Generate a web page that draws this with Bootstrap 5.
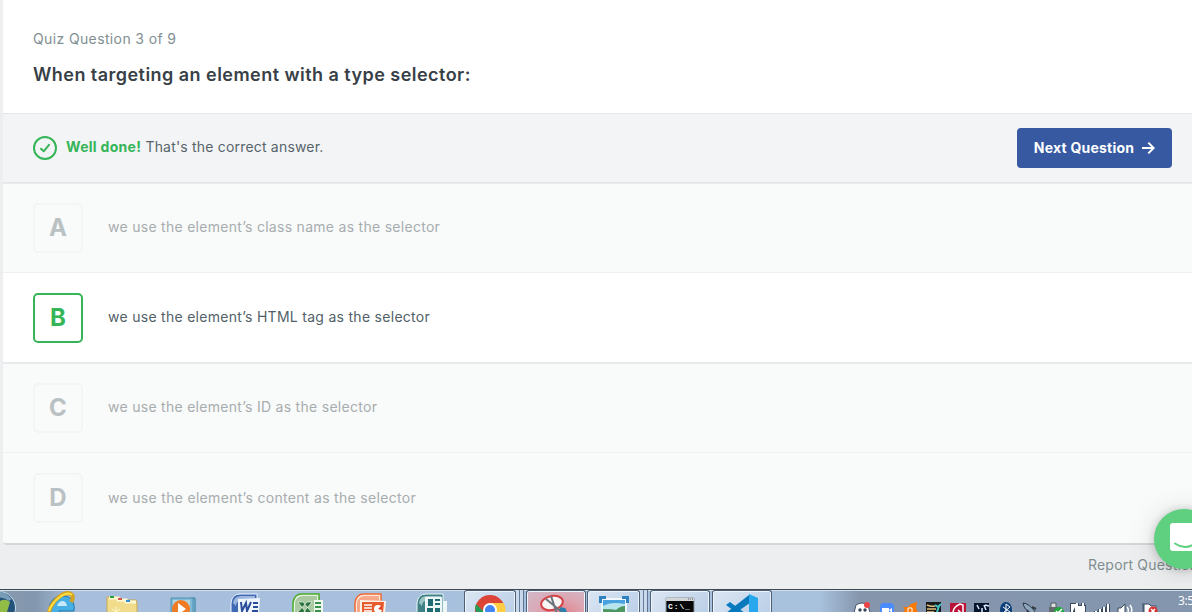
<!DOCTYPE html>
<html lang="en">
<head>
<meta charset="utf-8">
<meta name="viewport" content="width=device-width, initial-scale=1">
<title>Quiz Question 3 of 9</title>
<link href="https://cdn.jsdelivr.net/npm/bootstrap@5.3.0/dist/css/bootstrap.min.css" rel="stylesheet">
<style>
html,body{height:612px;overflow:hidden}
body{background:#edeef0;font-family:Inter,"Open Sans",sans-serif;font-size:14px;line-height:20px;color:#57646b;white-space:nowrap}
.quiz-panel{margin-left:3px;height:545px;border-bottom:2px solid #d3d7d8;border-bottom-left-radius:4px;overflow:hidden;background:#fff}
.quiz-head{height:113px;padding:29px 30px 0}
.quiz-step{color:#7f8f91;letter-spacing:.37px}
.quiz-title{font-size:18px;font-weight:600;line-height:26px;color:#384047;margin:13px 0 0;letter-spacing:.46px}
.feedback{height:70px;background:#f3f4f6;border-top:1px solid #e3e6e8;border-bottom:1px solid #e3e6e8;padding:0 20px 0 30px}
.feedback-copy{margin-left:9px;padding-bottom:2px;letter-spacing:.19px}
.feedback b{color:#35b558;font-weight:700;letter-spacing:.3px}
.btn-next{width:155px;height:40px;border:0;border-radius:4px;background:#3659a2;color:#fff;font-size:14px;font-weight:700;padding:0 0 1px;letter-spacing:.22px}
.btn-next:hover{background:#2f4f92;color:#fff}
.answer{height:90px;padding:0 30px;gap:25px;background:#f9fafa;border-bottom:1px solid #eff1f1;color:#a7adaf}
.answer.after-line{box-shadow:inset 0 1px #e8eaeb}
.answer.chosen{background:#fff;color:#525f68;border-bottom-color:#e8eaeb}
.answer:last-child{border-bottom:0}
.answer-text{letter-spacing:.285px;padding-bottom:2px}
.answer:last-child .answer-text{padding-bottom:0;letter-spacing:.31px}
.letter-box{width:50px;height:50px;border:2px solid #f3f5f5;border-radius:5px;color:#b9c1c3;font-size:24px;font-weight:700}
.chosen .letter-box{border-color:#35b558;color:#35b558}
.report{height:44px;padding:10px 0 0 1088px;color:#7f8f91;letter-spacing:.2px}
.chat{position:absolute;left:1154px;top:509px;width:60px;height:60px;border-radius:50%;background:#5fcf80;box-shadow:0 1px 8px #0003,0 2px 30px #0002}
.chat-clip{position:absolute;inset:0;height:589px;overflow:hidden;pointer-events:none}
.taskbar{position:relative;height:23px;background:linear-gradient(90deg,#889aaf 0,#8296ad 35px,#a7bfdc 72px,#a8c1dd 820px,#8495ac 860px,#8496ae 100%);border-top:1px solid #3f4953;box-shadow:inset 0 1px #d2dfeb;overflow:hidden}
.taskbar svg{display:block;flex:none;margin-top:1px}
.slot{width:62px;flex:none}
.win{flex:none;height:24px;border:1px solid #4d6076;border-bottom:0;border-radius:3px 3px 0 0;box-shadow:inset 0 0 0 1px #edf4fc;background:linear-gradient(135deg,#dce6f2,#b9cee7)}
.win svg{margin-left:auto;margin-right:auto}
.win.red{background:radial-gradient(ellipse at 60% 100%,#e28088,#dba8b4 50%,#cfb9ca)}
.stack-edge{flex:none;width:8px;height:24px;margin-right:2px;border-right:1px solid #5d7390;background:linear-gradient(90deg,#c9d9eb 0 3px,#667d99 3px 4px,#c9d9eb 4px)}
.tray{width:312px;margin-left:78px}
.clock{font:12px/22px "Open Sans","Noto Sans",sans-serif;color:#fff;margin-left:16px;letter-spacing:-.4px}
.cmd{font:bold 8px "Liberation Mono",monospace;letter-spacing:.9px}
</style>
</head>
<body class="position-relative">
<main class="quiz-panel">
  <header class="quiz-head">
    <div class="quiz-step"><span id="step">Quiz Question 3 of 9</span></div>
    <h1 class="quiz-title"><span>When targeting an element with a type selector:</span></h1>
  </header>
  <section class="feedback d-flex align-items-center justify-content-between">
    <div class="d-flex align-items-center">
      <svg width="24" height="24" fill="none" stroke="#35b558" stroke-width="2"><circle cx="12" cy="12" r="11"/><path d="M8 12.800l2.700 2.500L16 8.800" stroke-linecap="round" stroke-linejoin="round"/></svg>
      <div class="feedback-copy"><b>Well done!</b> <span>That's the correct answer.</span></div>
    </div>
    <button class="btn btn-next d-flex align-items-center justify-content-center"><span>Next Question</span><svg class="ms-2" width="13" height="14" fill="none" stroke="#fff" stroke-width="2"><path d="M0 7h11.5M6.3 1.6L11.7 7l-5.4 5.4"/></svg></button>
  </section>
  <div class="answers">
    <div class="answer after-line d-flex align-items-center"><div class="letter-box d-flex align-items-center justify-content-center">A</div><span class="answer-text">we use the element’s class name as the selector</span></div>
    <div class="answer chosen d-flex align-items-center"><div class="letter-box d-flex align-items-center justify-content-center">B</div><span class="answer-text">we use the element’s HTML tag as the selector</span></div>
    <div class="answer after-line d-flex align-items-center"><div class="letter-box d-flex align-items-center justify-content-center">C</div><span class="answer-text">we use the element’s ID as the selector</span></div>
    <div class="answer d-flex align-items-center"><div class="letter-box d-flex align-items-center justify-content-center">D</div><span class="answer-text">we use the element’s content as the selector</span></div>
  </div>
</main>
<div class="report"><span>Report Question</span></div>
<div class="chat-clip"><div class="chat"><svg width="60" height="60"><path d="M19 14h24a3 3 0 013 3v29l-7-4H19a3 3 0 01-3-3V17a3 3 0 013-3z" fill="#fff"/><path d="M21 34.500q10 7 20 0" fill="none" stroke="#5fcf80" stroke-width="2" stroke-linecap="round"/></svg></div></div>

<footer class="taskbar d-flex">
  <svg width="30" height="21"><circle cx="-1" cy="17" r="16.500" fill="#23527b" stroke="#c4dded"/><path d="M-12 4Q0-5 12 8L9 10Q0 3-12 10z" fill="#789db9"/><path d="M0 10q5-3 10 1l-3 10H0z" fill="#91bc45"/></svg>
  <!-- pinned programs -->
  <svg class="slot" height="21"><path d="M20 24C17 11 24 5 33 5c9 0 12 7 11 15H29c1 3 5 3 8 3" fill="#47afe3" stroke="#1c76ae"/><path d="M27 15c2-6 9-7 10 0z" fill="#c7e9fa"/><path d="M19 21C22 9 36-2 42 4q2 2-1 7" fill="none" stroke="#d5a21d" stroke-width="4"/><path d="M19 20C23 9 36-1 42 4" fill="none" stroke="#ffdf44" stroke-width="2"/></svg>
  <svg class="slot" height="21"><path d="M15 22V6h11l2 3h16l1 3v10z" fill="#f1dc8b" stroke="#c8a956"/><path d="M17 7h9v2h8v2h10" fill="none" stroke="#fff8d5" stroke-width="3"/><path d="M18 6h4" stroke="#26a33c" stroke-width="2"/><path d="M26 8h4" stroke="#db5547" stroke-width="2"/><path d="M34 10h4" stroke="#328ed7" stroke-width="2"/><path d="M24 16v5m-4-3l4 3m4-3l-4 3" stroke="#fff9d6"/></svg>
  <svg class="slot" height="21"><path d="M17 7h24v15H17z" fill="#82b9d5" stroke="#4f90b3"/><path d="M37 7h4v15m-2-15v15" stroke="#4f90b3" fill="none"/><path d="M19 9h17v13H19z" fill="#b2d5e4"/><circle cx="27" cy="18" r="9" fill="#f07b25"/><path d="M24 12l8 6-8 6z" fill="#fff"/></svg>
  <svg class="slot" height="21"><path d="M15 22V12q1-9 9-9h17v19z" fill="#3f69b2" stroke="#edf3ff"/><path d="M17 12q1-7 8-7h14v5H25q-5 0-5 5z" fill="#9eb6dd"/><path d="M22 8l22-1-1 15H22z" fill="#edf4fb"/><path d="M25 11l1 9 4-8 1 8 4-9" fill="none" stroke="#294c9a" stroke-width="2"/><path d="M37 12h5m-5 4h5m-6 4h6" stroke="#294c9a" stroke-width="2"/></svg>
  <svg class="slot" height="21"><path d="M15 22V12q1-9 9-9h17v19z" fill="#e7f4e1" stroke="#4cac27" stroke-width="1.500"/><path d="M17 22V12q1-7 8-7h14v17z" fill="#a9c9a0"/><path d="M36 9h9v13h-9z" fill="#edf7ed"/><path d="M20 11h5l10 12h-6zm14 0h-5L19 22h6z" fill="#28723c" stroke="#fff" stroke-width=".6"/><path d="M37 12h6m-6 4h6m-6 4h6" stroke="#37924a" stroke-width="2"/></svg>
  <svg class="slot" height="21"><path d="M15 22V12q1-9 9-9h17v19z" fill="#ffe9dd" stroke="#f26a35" stroke-width="1.500"/><path d="M17 22V12q1-7 8-7h14v17z" fill="#f6a888"/><path d="M20 9l26 1-1 12H20z" fill="#fff0e6"/><path d="M22 11h22l-1 11H22z" fill="#e75b2d"/><path d="M24 14h8m-8 3h8m-8 3h8" stroke="#fff" stroke-width="1.500"/><circle cx="38" cy="18" r="4" fill="#fff"/><path d="M38 18l4-4v5z" fill="#df4322"/></svg>
  <svg class="slot" height="21"><path d="M15 22V12q1-9 9-9h17v19z" fill="#3f8187" stroke="#e7f5f5"/><path d="M17 12q1-7 8-7h14v5H25q-5 0-5 5z" fill="#9cc4c5"/><path d="M23 6h17v16H23z" fill="#edf6f7"/><path d="M26 8h5v7h-5zm7 0h5v2h-5zm0 4h5v2h-5zm-8 5h6v4h-6zm8 0h5v4h-5z" fill="#206a72"/><path d="M43 10v11" stroke="#edf6f7" stroke-width="4"/></svg>
  <!-- open windows -->
  <div class="win" style="width:52px"><svg width="32" height="22"><circle cx="16" cy="18" r="15" fill="#db4437"/><path d="M2 12l9 9-3 5Q-1 20 2 12z" fill="#209e58"/><path d="M16 11h13.500q4 7 0 15H17l5-8z" fill="#ffcd43"/><circle cx="16" cy="18" r="6" fill="#4285f4" stroke="#fff" stroke-width="2"/></svg></div><i class="stack-edge"></i>
  <div class="win red me-0" style="width:60px"><svg width="44" height="22"><ellipse cx="18" cy="11" rx="11" ry="7" fill="#f8f5f5" stroke="#d34448" stroke-width="2" transform="rotate(-12 18 11)"/><path d="M12 7l17 14M17 4l6 18" stroke="#6b747d" stroke-width="2"/><path d="M26 17l4 1 2 5" fill="none" stroke="#297eaf" stroke-width="4"/></svg></div>
  <div class="win" style="width:53px;margin-left:1px"><svg width="32" height="22"><path d="M3 6h26v17H3z" fill="#eff8fe"/><path d="M5 8h22v14H5z" fill="#4aa1df"/><path d="M5 14q8-5 22-2v10H5z" fill="#b6e4ed"/><path d="M5 17q9 0 13 1 4-4 9-4v8H5z" fill="#4f9762"/><path d="M2.500 11V5.500H8m16 0h5.500V11" fill="none" stroke="#2f82bf" stroke-width="3"/></svg></div><i class="stack-edge"></i>
  <div class="win" style="width:60px;margin-right:2px"><svg width="30" height="22"><path d="M1 6h28v17H1z" fill="#060708" stroke="#8b949b"/><path d="M1 6h28v3H1z" fill="#d1d5d6"/><path d="M23 7h5" stroke="#596067" stroke-dasharray="1 1"/><text class="cmd" x="3" y="17" fill="#fff">C:\_</text></svg></div>
  <div class="win" style="width:60px"><svg width="34" height="22"><path d="M1 13l4-3 23 17-4 3z" fill="#087cc2"/><path d="M1 21L24 3l5 5L5 25z" fill="#0878bd"/><path d="M24 2l9 4v20h-9z" fill="#27a8ee"/></svg></div>
  <!-- notification area -->
  <div class="tray d-flex">
    <svg width="24" height="21"><path d="M4 22l2-8q6-4 12 0l2 8z" fill="#fff" stroke="#47566b"/><circle cx="10" cy="19" r="1.700" fill="#35465c"/><circle cx="15" cy="19" r="1.700" fill="#35465c"/><circle cx="17" cy="14" r="3" fill="#ed4245"/></svg>
    <svg width="24" height="21"><rect x="6" y="12" width="14" height="12" rx="4" fill="#4a8cff"/><path d="M8 17h7v4H8m7-2l3-2v5" fill="#fff"/></svg>
    <svg width="24" height="21"><path d="M4 22l3-3-2-3h5l3-3 6-2-1 6 2 5z" fill="#ff7800"/><path d="M10 21v-4h4v4" fill="none" stroke="#fff"/></svg>
    <svg width="24" height="21"><path d="M4 11h15v11H4z" fill="#171c1b"/><path d="M5 14q4 2 8 1M5 18h9M5 21h7" fill="none" stroke="#e3bf80" stroke-width="1.500"/><path d="M15 21l2-6m-4-1l3 2 3-3" stroke="#44c2c9" stroke-width="2" fill="none"/></svg>
    <svg width="24" height="21"><path d="M4 12h16v10H4z" fill="#bd1237"/><path d="M7 22q0-6 7-9l3 1v8m-5-3l3 3" fill="none" stroke="#fff" stroke-width="1.500"/></svg>
    <svg width="24" height="21"><path d="M4 12h15v10H4z" fill="#05142b"/><path d="M7 14l2 4m3-1v5m2-8l2 5m-1-5l4 1" stroke="#dceaff" stroke-width="1.500"/></svg>
    <svg width="24" height="21"><ellipse cx="12" cy="19" rx="6" ry="8" fill="#0d3f79"/><path d="M9 16l7 5-4 3V13l4 3-7 6" fill="none" stroke="#fff"/></svg>
    <svg width="24" height="21"><path d="M5 12q6 0 13 10h-5Q6 19 5 12z" fill="#8da6bd" stroke="#303945"/><path d="M14 16l4 2m-9 1l2 3" stroke="#343943" stroke-width="2"/></svg>
    <svg width="24" height="21"><path d="M9 12h5v5H9z" fill="#dce0df" stroke="#505b64"/><path d="M7 16h9v6H7z" fill="#626a6b"/><circle cx="17" cy="21" r="5" fill="#1ea83c"/><path d="M14 20l2 2 4-4" fill="none" stroke="#fff" stroke-width="1.500"/></svg>
    <svg width="24" height="21"><path d="M10 14H6v8m4-6h8v4q-4 2-8 0zm1 0v-4m6 4v-4" fill="none" stroke="#394b61" stroke-width="4"/><path d="M10 14H6v8m4-6h8v4q-4 2-8 0zm1 0v-4m6 4v-4" fill="#fff" stroke="#fff" stroke-width="2"/></svg>
    <svg width="24" height="21"><path d="M6 22v-2m4 2v-4m4 4v-6m4 6V13" stroke="#394b61" stroke-width="4"/><path d="M6 22v-2m4 2v-4m4 4v-6m4 6V13" stroke="#fff" stroke-width="2"/></svg>
    <svg width="24" height="21"><path d="M4 17h3l4-4v9H4z" fill="#fff" stroke="#394b61"/><path d="M13 16q2 2 1 5m2-7q3 4 1 8" fill="none" stroke="#fff" stroke-width="1.500"/></svg>
    <svg width="24" height="21"><path d="M5 22V12m1 1h5l2 2h5v7H6z" fill="#fff" stroke="#394b61"/><circle cx="15" cy="20" r="4.500" fill="#db3131"/><path d="M13 18l4 4m0-4l-4 4" stroke="#fff" stroke-width="1.500"/></svg>
  </div>
  <span class="clock">3:5</span>
</footer>
<script src="https://cdn.jsdelivr.net/npm/bootstrap@5.3.0/dist/js/bootstrap.bundle.min.js"></script>
</body>
</html>
